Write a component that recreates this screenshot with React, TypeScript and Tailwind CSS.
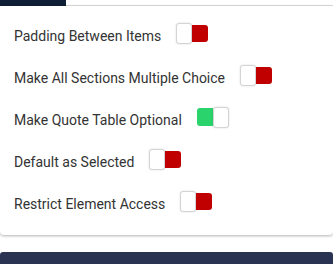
const rows: { label: string; on: boolean }[] = [
  { label: 'Padding Between Items', on: false },
  { label: 'Make All Sections Multiple Choice', on: false },
  { label: 'Make Quote Table Optional', on: true },
  { label: 'Default as Selected', on: false },
  { label: 'Restrict Element Access', on: false },
];

function Toggle({ on }: { on: boolean }) {
  const knob = (
    <span className="block w-[16px] h-[21px] bg-white border border-[#d4d4d4] rounded-[3px] shadow-[0_0_2px_rgba(0,0,0,0.15)]" />
  );
  return (
    <span className="flex items-center w-[32px] h-[21px] mb-[6px]">
      {on ? (
        <>
          <span className="block w-[16px] h-[18px] bg-[#2ad36c] rounded-l-[3px]" />
          {knob}
        </>
      ) : (
        <>
          {knob}
          <span className="block w-[16px] h-[17px] bg-[#c00000] rounded-r-[3px]" />
        </>
      )}
    </span>
  );
}

export default function App() {
  return (
    <div
      className="w-[333px] h-[264px] bg-white overflow-hidden flex flex-col"
      style={{ fontFamily: 'Roboto, "Liberation Sans", sans-serif' }}
    >
      <div className="flex h-[6px] shrink-0">
        <div className="w-[66px] bg-[#0f1f35]" />
        <div className="flex-1 border-b border-[#dcdcdc]" />
      </div>
      <div className="bg-white rounded-b-[4px] shadow-[0_1px_3px_rgba(0,0,0,0.3)] pt-[9px] pb-[10px]">
        {rows.map((r) => (
          <div key={r.label} className="flex items-center h-[42px] pl-[14px] gap-[15px]">
            <span className="text-[14px] text-[#333]">{r.label}</span>
            <Toggle on={r.on} />
          </div>
        ))}
      </div>
      <div className="mt-[17px] flex-1 bg-[#2b3352] rounded-t-[3px]" />
    </div>
  );
}
